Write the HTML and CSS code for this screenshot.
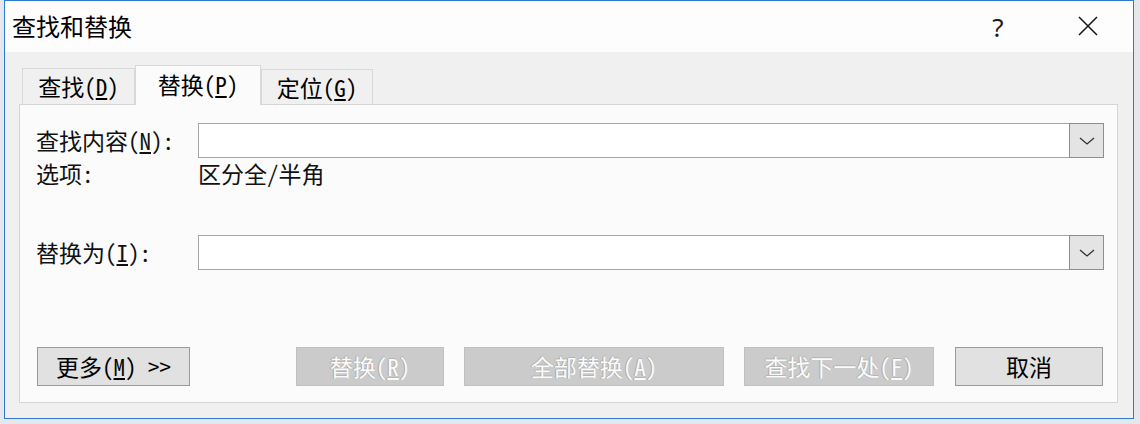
FILE: index.html
```html
<!DOCTYPE html>
<html lang="zh-CN">
<head>
    <meta charset="UTF-8">
    <title>查找和替换</title>
    <link rel="stylesheet" href="styles.css">
</head>
<body>
    <div class="window">
        <div class="titlebar">
            <span class="title">查找和替换</span>
            <span class="help">?</span>
            <span class="close">
                <svg width="20" height="20" viewBox="0 0 20 20">
                    <path d="M1 1 L19 19 M19 1 L1 19" stroke="#1a1a1a" stroke-width="1.6" fill="none"/>
                </svg>
            </span>
        </div>
        <div class="dialog-body">
            <div class="tabs">
                <div class="tab tab-find">查找<span class="key">(<u>D</u>)</span></div>
                <div class="tab tab-replace active">替换<span class="key">(<u>P</u>)</span></div>
                <div class="tab tab-goto">定位<span class="key">(<u>G</u>)</span></div>
            </div>
            <div class="panel">
                <div class="field-row">
                    <span class="field-label">查找内容<span class="key">(<u>N</u>):</span></span>
                    <div class="combo">
                        <input class="combo-input" type="text">
                        <span class="combo-drop">
                            <svg width="16" height="8" viewBox="0 0 16 8">
                                <path d="M1 1 L8 7 L15 1" stroke="#333" stroke-width="1.3" fill="none"/>
                            </svg>
                        </span>
                    </div>
                </div>
                <div class="option-row">
                    <span class="field-label">选项<span class="key">:</span></span>
                    <span class="option-value">区分全<span class="key">/</span>半角</span>
                </div>
                <div class="field-row replace-row">
                    <span class="field-label">替换为<span class="key">(<u>I</u>):</span></span>
                    <div class="combo">
                        <input class="combo-input" type="text">
                        <span class="combo-drop">
                            <svg width="16" height="8" viewBox="0 0 16 8">
                                <path d="M1 1 L8 7 L15 1" stroke="#333" stroke-width="1.3" fill="none"/>
                            </svg>
                        </span>
                    </div>
                </div>
                <div class="button-row">
                    <button class="btn btn-more">更多<span class="key">(<u>M</u>) &gt;&gt;</span></button>
                    <button class="btn btn-replace" disabled>替换<span class="key">(<u>R</u>)</span></button>
                    <button class="btn btn-replace-all" disabled>全部替换<span class="key">(<u>A</u>)</span></button>
                    <button class="btn btn-next" disabled>查找下一处<span class="key">(<u>F</u>)</span></button>
                    <button class="btn btn-cancel">取消</button>
                </div>
            </div>
        </div>
    </div>
</body>
</html>
```

FILE: styles.css
```css
body {
    margin: 0;
    background-color: #e4e7eb;
    font-family: "Noto Sans CJK SC", sans-serif;
    color: #000000;
}
.window {
    margin-left: 4px;
    width: 1130px;
    height: 419px;
    box-sizing: border-box;
    border: 1px solid #2f7ad1;
    background-color: #f0f0f0;
    display: flex;
    flex-direction: column;
}
.key {
    font-family: "Noto Sans Mono CJK SC", "Liberation Mono", monospace;
}

/* title bar */
.titlebar {
    height: 51px;
    flex-shrink: 0;
    background-color: #fdfdfd;
    display: flex;
    align-items: center;
    padding: 0 22px 0 7px;
}
.title {
    font-size: 24px;
    line-height: 1;
    margin-top: -2px;
}
.help {
    margin-left: auto;
    width: 20px;
    text-align: center;
    font-family: "Noto Sans", sans-serif;
    font-size: 26px;
    line-height: 1;
    color: #1a1a1a;
}
.close {
    margin-left: 57px;
    width: 46px;
    display: flex;
    justify-content: center;
    margin-top: -1px;
}

/* tabs + page */
.dialog-body {
    padding: 13px 15px 0 14px;
}
.tabs {
    display: flex;
    align-items: flex-end;
    height: 40px;
    padding-left: 3px;
    margin-bottom: -1px;
    position: relative;
    z-index: 1;
}
.tab {
    box-sizing: border-box;
    height: 36px;
    margin-bottom: 1px;
    border: 1px solid #d9d9d9;
    border-bottom: none;
    background-color: #f0f0f0;
    display: flex;
    align-items: center;
    justify-content: center;
    font-size: 23px;
    line-height: 1;
}
.tab-find {
    width: 113px;
}
.tab.active {
    width: 126px;
    height: 40px;
    margin-bottom: 0;
    background-color: #fbfbfb;
    padding-bottom: 2px;
}
.tab-goto {
    width: 112px;
    height: 35px;
}
.panel {
    height: 299px;
    box-sizing: border-box;
    border: 1px solid #d5d5d5;
    background-color: #fbfbfb;
    padding: 18px 13px 0 16px;
}
.field-row {
    display: flex;
    align-items: center;
    height: 35px;
}
.field-label {
    width: 162px;
    flex-shrink: 0;
    font-size: 23px;
    line-height: 1;
    color: #111111;
}
.combo {
    flex: 1;
    height: 35px;
    box-sizing: border-box;
    display: flex;
    border: 1px solid #a5a5a5;
    background-color: #ffffff;
}
.combo-input {
    flex: 1;
    min-width: 0;
    border: none;
    outline: none;
    background: transparent;
    font-size: 20px;
}
.combo-drop {
    width: 35px;
    box-sizing: border-box;
    margin: -1px -1px -1px 0;
    border: 1px solid #8e8e8e;
    background-color: #e4e4e4;
    display: flex;
    align-items: center;
    justify-content: center;
}
.option-row {
    display: flex;
    align-items: center;
    height: 34px;
    margin-top: -2px;
}
.option-value {
    font-size: 23px;
    line-height: 1;
    color: #111111;
}
.replace-row {
    margin-top: 45px;
}

/* buttons */
.button-row {
    display: flex;
    margin-top: 77px;
    padding: 0 1px 0 1px;
}
.btn {
    box-sizing: border-box;
    height: 39px;
    padding: 0;
    font-family: inherit;
    font-size: 23px;
    line-height: 1;
    color: #000000;
    background-color: #e1e1e1;
    border: 1px solid #9a9a9a;
    margin-left: 20px;
}
.btn:disabled {
    background-color: #cbcbcb;
    border-color: #c0c0c0;
    color: #fbfbfb;
    text-shadow: -1px 0 0 #a8a8a8, 0 -1px 0 #b5b5b5;
}
.btn-more {
    width: 153px;
    margin-left: 0;
    margin-right: auto;
}
.btn-replace {
    width: 148px;
}
.btn-replace-all {
    width: 260px;
}
.btn-next {
    width: 190px;
}
.btn-cancel {
    width: 148px;
    margin-left: 21px;
}
```
